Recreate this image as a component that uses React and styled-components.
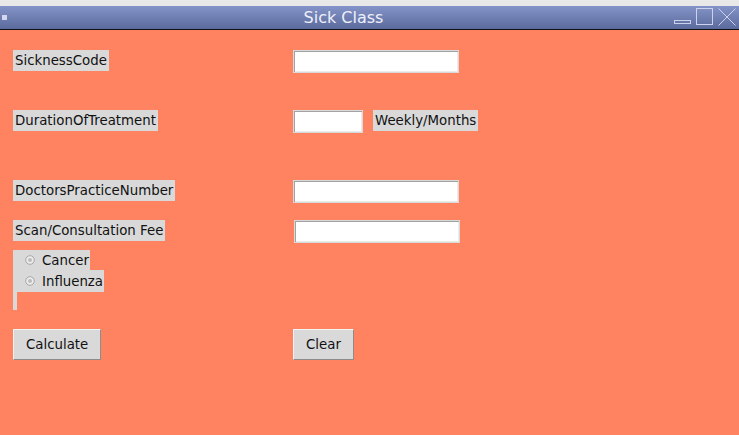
import React, { useState } from "react";
import styled, { createGlobalStyle } from "styled-components";

const GlobalStyle = createGlobalStyle`
    html, body {
        margin: 0;
        padding: 0;
        height: 100%;
    }
    body {
        font-family: "DejaVu Sans", "Liberation Sans", sans-serif;
        background: #e8e8e8;
    }
    #root {
        height: 100%;
    }
`;

const Window = styled.div`
    height: 100%;
    display: flex;
    flex-direction: column;
    padding-top: 6px;
    box-sizing: border-box;
`;

const TitleBar = styled.div`
    height: 23px;
    position: relative;
    display: flex;
    align-items: center;
    justify-content: center;
    padding-right: 52px;
    background: linear-gradient(#8494c8, #5a6a9c);
    border-bottom: 1px solid #111;
    color: #eef0fa;
    font-size: 16px;
`;

const MenuIcon = styled.span`
    position: absolute;
    left: 2px;
    top: 9px;
    width: 5px;
    height: 5px;
    background: #d4d8ee;
`;

const Controls = styled.div`
    position: absolute;
    right: 3px;
    top: 2px;
    display: flex;
    gap: 4px;
    align-items: flex-end;
`;

const Content = styled.div`
    flex: 1;
    background: #ff8261;
    padding: 20px 0 0 13px;
    display: flex;
    flex-direction: column;
`;

const FormRow = styled.div`
    display: grid;
    grid-template-columns: 280px auto;
    align-items: start;
    margin-top: ${(p) => p.$gap || 0}px;
`;

const Label = styled.span`
    justify-self: start;
    height: 21px;
    line-height: 21px;
    padding: 0 2px;
    background: #d9d9d9;
    color: #111;
    font-size: 13.33px;
    white-space: nowrap;
`;

const Field = styled.div`
    display: flex;
    align-items: flex-start;
    gap: 10px;
    margin-left: ${(p) => p.$nudge || 0}px;
`;

const Entry = styled.input`
    width: ${(p) => p.$width}px;
    height: 23px;
    box-sizing: border-box;
    margin: 0;
    padding: 0 3px;
    background: #fff;
    border: 1px solid #d9d9d9;
    box-shadow: inset 1px 1px 0 #a2a2a2, inset -1px -1px 0 #ececec;
    outline: none;
    font-family: inherit;
    font-size: 13.33px;
`;

const RadioGroup = styled.div`
    display: flex;
    flex-direction: column;
    align-items: flex-start;
`;

const RadioItem = styled.label`
    display: flex;
    align-items: center;
    gap: 7px;
    height: ${(p) => (p.$tall ? 22 : 20)}px;
    padding: 0 1px 0 12px;
    background: #d9d9d9;
    color: #111;
    font-size: 13.33px;
    cursor: pointer;
`;

const RadioTail = styled.div`
    width: 4px;
    height: 18px;
    background: #d9d9d9;
`;

const Button = styled.button`
    height: 31px;
    margin: 0;
    padding: 0 12px;
    background: #d9d9d9;
    color: #111;
    border: 1px solid;
    border-color: #f4f4f4 #8c8c8c #8c8c8c #f4f4f4;
    font-family: inherit;
    font-size: 13.33px;
    justify-self: start;
    cursor: pointer;
`;

function RadioDot() {
    return (
        <svg width="10" height="10" viewBox="0 0 10 10">
            <circle cx="5" cy="5" r="4.3" fill="#ececec" stroke="#a6a6a6" strokeWidth="1" />
            <circle cx="5" cy="5" r="2" fill="#bcbcbc" />
        </svg>
    );
}

function WindowControls() {
    return (
        <Controls>
            <svg width="18" height="6" viewBox="0 0 18 6">
                <rect x="0.5" y="0.5" width="16" height="3" fill="none" stroke="#ccd1ec" />
            </svg>
            <svg width="18" height="18" viewBox="0 0 18 18">
                <rect x="0.5" y="0.5" width="16" height="16" fill="none" stroke="#ccd1ec" />
            </svg>
            <svg width="18" height="18" viewBox="0 0 18 18">
                <path d="M0.5 0.5 L17.5 17.5 M17.5 0.5 L0.5 17.5" stroke="#ccd1ec" strokeWidth="1" />
            </svg>
        </Controls>
    );
}

export default function App() {
    const [sickness, setSickness] = useState("");

    return (
        <>
            <GlobalStyle />
            <Window>
                <TitleBar>
                    <MenuIcon />
                    Sick Class
                    <WindowControls />
                </TitleBar>
                <Content>
                    <FormRow>
                        <Label>SicknessCode</Label>
                        <Entry $width={166} />
                    </FormRow>
                    <FormRow $gap={37}>
                        <Label>DurationOfTreatment</Label>
                        <Field>
                            <Entry $width={70} />
                            <Label>Weekly/Months</Label>
                        </Field>
                    </FormRow>
                    <FormRow $gap={47}>
                        <Label>DoctorsPracticeNumber</Label>
                        <Entry $width={166} />
                    </FormRow>
                    <FormRow $gap={17}>
                        <Label>Scan/Consultation Fee</Label>
                        <Field $nudge={1}>
                            <Entry $width={166} />
                        </Field>
                    </FormRow>
                    <FormRow $gap={7}>
                        <RadioGroup>
                            <RadioItem onClick={() => setSickness("cancer")}>
                                <RadioDot />
                                Cancer
                            </RadioItem>
                            <RadioItem $tall onClick={() => setSickness("influenza")}>
                                <RadioDot />
                                Influenza
                            </RadioItem>
                            <RadioTail />
                        </RadioGroup>
                    </FormRow>
                    <FormRow $gap={19}>
                        <Button>Calculate</Button>
                        <Button>Clear</Button>
                    </FormRow>
                </Content>
            </Window>
        </>
    );
}
